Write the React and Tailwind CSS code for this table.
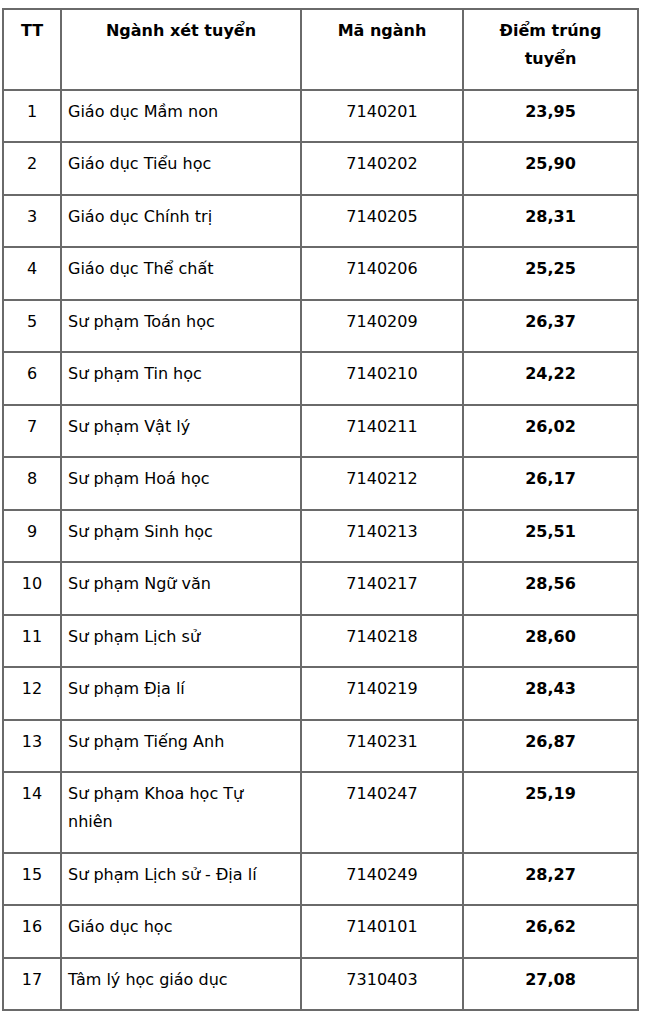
import React from "react";

const rows = [
  ["1", "Giáo dục Mầm non", "7140201", "23,95"],
  ["2", "Giáo dục Tiểu học", "7140202", "25,90"],
  ["3", "Giáo dục Chính trị", "7140205", "28,31"],
  ["4", "Giáo dục Thể chất", "7140206", "25,25"],
  ["5", "Sư phạm Toán học", "7140209", "26,37"],
  ["6", "Sư phạm Tin học", "7140210", "24,22"],
  ["7", "Sư phạm Vật lý", "7140211", "26,02"],
  ["8", "Sư phạm Hoá học", "7140212", "26,17"],
  ["9", "Sư phạm Sinh học", "7140213", "25,51"],
  ["10", "Sư phạm Ngữ văn", "7140217", "28,56"],
  ["11", "Sư phạm Lịch sử", "7140218", "28,60"],
  ["12", "Sư phạm Địa lí", "7140219", "28,43"],
  ["13", "Sư phạm Tiếng Anh", "7140231", "26,87"],
  ["14", "Sư phạm Khoa học Tự|nhiên", "7140247", "25,19"],
  ["15", "Sư phạm Lịch sử - Địa lí", "7140249", "28,27"],
  ["16", "Giáo dục học", "7140101", "26,62"],
  ["17", "Tâm lý học giáo dục", "7310403", "27,08"],
];

const cell =
  "border-2 border-[#6a6a6a] align-top pt-[7px] pb-[15.5px] px-[6px] leading-[28px]";

export default function App() {
  return (
    <div
      className="bg-white w-[647px] h-[1021px] pt-[8px] pl-[2px] text-black text-[16px]"
      style={{ fontFamily: '"DejaVu Sans", Verdana, sans-serif' }}
    >
      <table className="border-collapse table-fixed w-[635px]">
        <colgroup>
          <col className="w-[58px]" />
          <col className="w-[240px]" />
          <col className="w-[162px]" />
          <col className="w-[175px]" />
        </colgroup>
        <thead>
          <tr className="font-bold">
            <th className={`${cell} text-center`}>TT</th>
            <th className={`${cell} text-center`}>Ngành xét tuyển</th>
            <th className={`${cell} text-center`}>Mã ngành</th>
            <th className={`${cell} text-center`}>
              Điểm trúng
              <br />
              tuyển
            </th>
          </tr>
        </thead>
        <tbody>
          {rows.map(([tt, name, code, score]) => {
            const parts = name.split("|");
            return (
              <tr key={tt}>
                <td className={`${cell} text-center`}>{tt}</td>
                <td className={`${cell} text-left`}>
                  {parts[0]}
                  {parts[1] && (
                    <>
                      <br />
                      {parts[1]}
                    </>
                  )}
                </td>
                <td className={`${cell} text-center`}>{code}</td>
                <td className={`${cell} text-center font-bold`}>{score}</td>
              </tr>
            );
          })}
        </tbody>
      </table>
    </div>
  );
}
